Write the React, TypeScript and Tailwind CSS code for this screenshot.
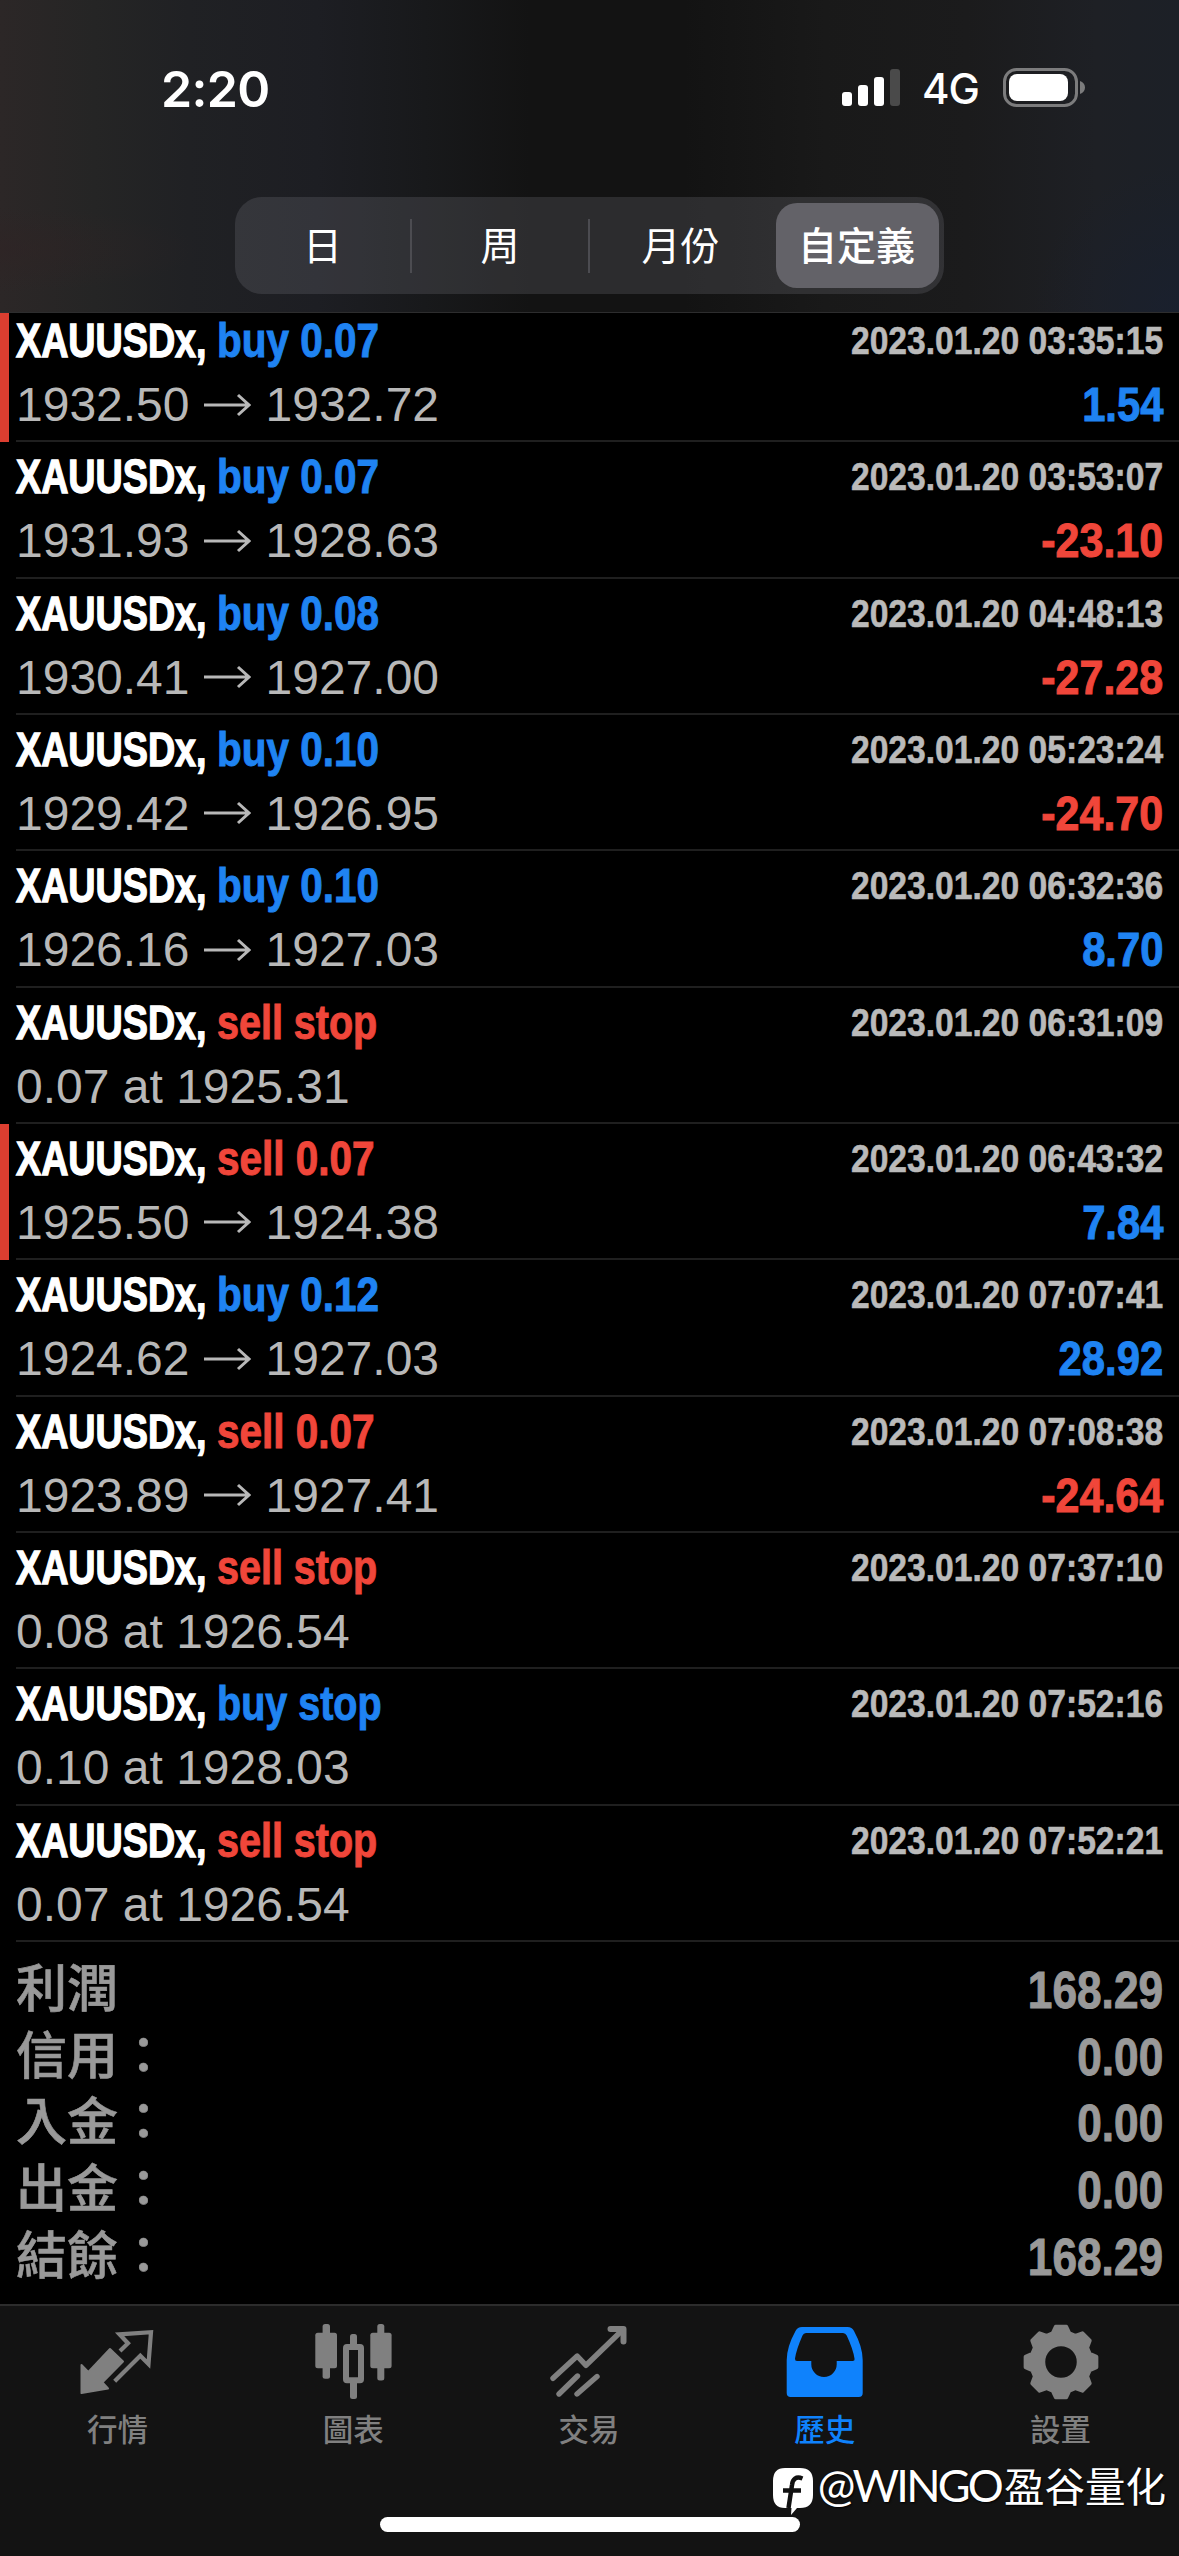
import type { ReactNode } from "react";
import clsx from "clsx";

type Side = "buy" | "sell";

interface Deal {
  side: Side;
  label: string;
  time: string;
  open?: string;
  close?: string;
  note?: string;
  profit?: string;
  marked?: boolean;
}

const deals: Deal[] = [
  { side: "buy", label: "buy 0.07", time: "2023.01.20 03:35:15", open: "1932.50", close: "1932.72", profit: "1.54", marked: true },
  { side: "buy", label: "buy 0.07", time: "2023.01.20 03:53:07", open: "1931.93", close: "1928.63", profit: "-23.10" },
  { side: "buy", label: "buy 0.08", time: "2023.01.20 04:48:13", open: "1930.41", close: "1927.00", profit: "-27.28" },
  { side: "buy", label: "buy 0.10", time: "2023.01.20 05:23:24", open: "1929.42", close: "1926.95", profit: "-24.70" },
  { side: "buy", label: "buy 0.10", time: "2023.01.20 06:32:36", open: "1926.16", close: "1927.03", profit: "8.70" },
  { side: "sell", label: "sell stop", time: "2023.01.20 06:31:09", note: "0.07 at 1925.31" },
  { side: "sell", label: "sell 0.07", time: "2023.01.20 06:43:32", open: "1925.50", close: "1924.38", profit: "7.84", marked: true },
  { side: "buy", label: "buy 0.12", time: "2023.01.20 07:07:41", open: "1924.62", close: "1927.03", profit: "28.92" },
  { side: "sell", label: "sell 0.07", time: "2023.01.20 07:08:38", open: "1923.89", close: "1927.41", profit: "-24.64" },
  { side: "sell", label: "sell stop", time: "2023.01.20 07:37:10", note: "0.08 at 1926.54" },
  { side: "buy", label: "buy stop", time: "2023.01.20 07:52:16", note: "0.10 at 1928.03" },
  { side: "sell", label: "sell stop", time: "2023.01.20 07:52:21", note: "0.07 at 1926.54" },
];

const totals = [
  { label: "利潤", value: "168.29" },
  { label: "信用：", value: "0.00" },
  { label: "入金：", value: "0.00" },
  { label: "出金：", value: "0.00" },
  { label: "結餘：", value: "168.29" },
];

function StatusBar() {
  return (
    <div className="flex h-[197px] items-start justify-between pl-[161px] pr-[94px] pt-[56px] text-white">
      <span className="mt-[1px] font-['Inter'] text-[50px] font-semibold leading-[64px] tracking-[-0.7px]">2:20</span>
      <div className="flex h-[64px] items-center">
        <svg width="58" height="38" viewBox="0 0 58 38" fill="#fff">
          <rect x="0" y="23" width="10" height="14" rx="3" />
          <rect x="16" y="16" width="10" height="21" rx="3" />
          <rect x="32" y="8" width="10" height="29" rx="3" />
          <rect x="48" y="0" width="10" height="37" rx="3" fill="#4a4a4a" />
        </svg>
        <span className="ml-[22px] mt-[2px] w-[59px] font-['Inter'] text-[42px] font-medium leading-[64px] tracking-[-1px]">
          4G
        </span>
        <svg className="ml-[22px]" width="82" height="40" viewBox="0 0 82 40">
          <rect x="1.5" y="1.5" width="72" height="36" rx="12" fill="none" stroke="#7c7c7d" strokeWidth="3" />
          <rect x="6" y="6" width="59" height="27" rx="8" fill="#fff" />
          <path d="M77 13c3 1 5 3.500 5 6.500s-2 5.500-5 6.500z" fill="#7c7c7d" />
        </svg>
      </div>
    </div>
  );
}

function PeriodPicker() {
  return (
    <div className="mx-auto flex h-[97px] w-[709px] items-center rounded-[27px] bg-[#767680]/25 text-center font-['Noto_Sans_CJK_TC',sans-serif] text-[39px] leading-[85px] text-white">
      <div className="w-[175px] pb-[4px]">日</div>
      <div className="h-[54px] w-[2px] bg-[#4c4c51]" />
      <div className="w-[176px] pb-[4px]">周</div>
      <div className="h-[54px] w-[2px] bg-[#4c4c51]" />
      <div className="w-[181px] pb-[4px]">月份</div>
      <div className="ml-[5px] h-[85px] w-[163px] rounded-[21px] bg-[#636268] pr-[2px] font-medium leading-[81px]">自定義</div>
    </div>
  );
}

function PriceArrow() {
  return (
    <svg className="ml-[14px] mr-[15px] shrink-0" width="47" height="24" viewBox="0 0 47 24" fill="none" stroke="#b8b8b8" strokeWidth="3">
      <path d="M0 12h45M34 2l11 10-11 10" />
    </svg>
  );
}

function DealRow({ deal, first }: { deal: Deal; first: boolean }) {
  return (
    <div className={clsx("flex h-[136.33px]", first && "-mt-[7px]")}>
      <div className={clsx("w-[9px]", deal.marked && "bg-[#dc3e30]")} />
      <div className="ml-[7px] flex-1 whitespace-nowrap border-b-2 border-[#1f1f1f] pr-[16px]">
        <div className="flex h-[69px] items-center justify-between font-bold leading-[69px]">
          <div className="flex text-[48px]">
            <span className="w-[201px] origin-left scale-x-[0.785] text-white [-webkit-text-stroke:1.4px]">XAUUSDx,</span>
            <span
              className={clsx(
                "origin-left [-webkit-text-stroke:1px]",
                deal.side === "buy" ? "text-[#1f83f2]" : "text-[#f0463a]",
                deal.label.endsWith("stop") ? "scale-x-[0.823]" : "scale-x-[0.843]",
              )}
            >
              {deal.label}
            </span>
          </div>
          <span className="origin-right scale-x-[0.862] text-[39px] text-[#bababa] [-webkit-text-stroke:0.6px]">
            {deal.time}
          </span>
        </div>
        <div className="flex h-[59px] items-center justify-between text-[48px] leading-[59px]">
          {deal.note ? (
            <span className="text-[#b8b8b8]">{deal.note}</span>
          ) : (
            <div className="flex items-center text-[#b8b8b8]">
              <span>{deal.open}</span>
              <PriceArrow />
              <span>{deal.close}</span>
            </div>
          )}
          {deal.profit && (
            <span
              className={clsx(
                "origin-right font-bold [-webkit-text-stroke:1px]",
                deal.profit.startsWith("-") ? "scale-x-[0.895] text-[#f0463a]" : "scale-x-[0.87] text-[#1f83f2]",
              )}
            >
              {deal.profit}
            </span>
          )}
        </div>
      </div>
    </div>
  );
}

function Totals() {
  return (
    <div className="h-[362px] px-[16px] pt-[15px] text-[#999999]">
      {totals.map((row) => (
        <div key={row.label} className="flex h-[66.6px] items-center justify-between leading-[66px]">
          <span className="font-['Liberation_Sans','Noto_Sans_CJK_TC',sans-serif] text-[51px] font-medium [-webkit-text-stroke:0.6px]">
            {row.label}
          </span>
          <span className="origin-right scale-x-[0.85] text-[52px] font-bold [-webkit-text-stroke:1px]">{row.value}</span>
        </div>
      ))}
    </div>
  );
}

function QuotesIcon() {
  return (
    <svg width="84" height="84" viewBox="0 0 84 84">
      <path d="M5.500 45L12.300 52 34 29 47 41.500 26.500 62.300 32 68.500 5.500 73z" fill="currentColor" stroke="currentColor" strokeWidth="2" strokeLinejoin="round" />
      <path d="M38.700 61.300L64.300 35.700 72.500 44 75 12.200 43.500 14.300 52 23.300 44 31" fill="none" stroke="currentColor" strokeWidth="4.200" />
    </svg>
  );
}

function ChartIcon() {
  return (
    <svg width="84" height="84" viewBox="0 0 84 84" fill="currentColor">
      <rect x="3.300" y="12.700" width="21.700" height="35.600" rx="2.500" />
      <rect x="10.600" y="4" width="7.400" height="54.700" rx="2.500" />
      <rect x="58.300" y="12.700" width="21.300" height="35.600" rx="2.500" />
      <rect x="65.300" y="4" width="7" height="56.500" rx="2.500" />
      <rect x="38" y="14" width="7" height="15" rx="2.500" />
      <rect x="38" y="60" width="7" height="19" rx="2.500" />
      <rect x="34" y="27" width="15" height="33.300" rx="1" fill="none" stroke="currentColor" strokeWidth="6" />
    </svg>
  );
}

function TradeIcon() {
  return (
    <svg width="84" height="84" viewBox="0 0 84 84" fill="none" stroke="currentColor" strokeLinecap="round" strokeLinejoin="round">
      <path d="M6 58.300L30.200 36 39 45.300 75 10.500" strokeWidth="5.400" />
      <path d="M63.500 9H76.500V21.500" strokeWidth="6" />
      <path d="M12 74L30.500 56M30 74L50 56.500" strokeWidth="5.400" />
    </svg>
  );
}

function HistoryIcon() {
  return (
    <svg width="84" height="84" viewBox="0 0 84 84" fill="currentColor" fillRule="evenodd">
      <path d="M19 7H64.500Q69 7 71 11Q79.700 27 79.700 40V73Q79.700 77 75.700 77H7.700Q3.700 77 3.700 73V40Q3.700 27 12.500 11Q14.500 7 19 7ZM23 13Q20.500 13 19.500 15.500Q13.500 29 12 38.500Q11.800 41 14 41H28.300V44.300A12.700 12.700 0 0 0 53.700 44.300V41H69.500Q71.900 41 71.500 38.500Q70 29 63.700 15.500Q62.500 13 60 13Z" />
    </svg>
  );
}

// eight teeth, four corners each
const gearPoints = Array.from({ length: 8 }, (_, i) =>
  [
    [-16.5, 30],
    [-8.5, 36],
    [8.5, 36],
    [16.5, 30],
  ]
    .map(([offset, radius]) => {
      const angle = ((i * 45 + offset) * Math.PI) / 180;
      return `${42 + radius * Math.sin(angle)} ${42 - radius * Math.cos(angle)}`;
    })
    .join("L"),
).join("L");

function SettingsIcon() {
  return (
    <svg width="84" height="84" viewBox="0 0 84 84" fill="currentColor" fillRule="evenodd">
      <path
        d={`M${gearPoints}ZM42 24.500a17.500 17.500 0 1 0 0 35a17.500 17.500 0 1 0 0 -35Z`}
        stroke="currentColor"
        strokeWidth="3.500"
        strokeLinejoin="round"
      />
    </svg>
  );
}

const tabs: { label: string; icon: ReactNode; active?: boolean }[] = [
  { label: "行情", icon: <QuotesIcon /> },
  { label: "圖表", icon: <ChartIcon /> },
  { label: "交易", icon: <TradeIcon /> },
  { label: "歷史", icon: <HistoryIcon />, active: true },
  { label: "設置", icon: <SettingsIcon /> },
];

function TabBar() {
  return (
    <div className="relative h-[252px] border-t-2 border-[#2c2c2c] bg-[#131313]">
      <div className="flex pt-[14px]">
        {tabs.map((tab) => (
          <div
            key={tab.label}
            className={clsx("flex flex-1 flex-col items-center", tab.active ? "text-[#0f82fc]" : "text-[#808080]")}
          >
            {tab.icon}
            <span className="mt-[4px] pr-[1px] font-['Noto_Sans_CJK_TC',sans-serif] text-[30.5px] font-medium leading-[40px]">
              {tab.label}
            </span>
          </div>
        ))}
      </div>
      {/* home indicator */}
      <div className="absolute bottom-[24px] left-[380px] h-[15px] w-[420px] rounded-full bg-white" />
      {/* author tag */}
      <div className="absolute bottom-[40px] right-[13px] flex items-center whitespace-nowrap leading-[60px] text-white [text-shadow:1px_1px_2px_#000]">
        <svg className="mr-[4px] mt-[15px]" width="42" height="48" viewBox="0 0 42 48">
          <path
            d="M13 0H28Q41 0 41 13V27Q41 40 28 40H25L19 47 19.500 40H13Q1 40 1 27V13Q1 0 13 0Z"
            fill="#fff"
          />
          <path d="M30.500 10.500C24 8 20.500 11 20 17L16.500 40M11 22.500H29" fill="none" stroke="#111" strokeWidth="4.500" />
        </svg>
        <span className="font-['Lato'] text-[45px] tracking-[-2.8px]">@WINGO</span>
        <span className="ml-[3px] font-['Noto_Sans_CJK_SC',sans-serif] text-[40.5px]">盈谷量化</span>
      </div>
    </div>
  );
}

export default function App() {
  return (
    <div className="flex h-[2556px] w-[1179px] flex-col overflow-hidden bg-black font-['Liberation_Sans',sans-serif]">
      <header className="h-[313px] shrink-0 border-b border-[#2d2d2e] bg-[radial-gradient(circle_at_100%_100%,#17203480_0%,transparent_12%),radial-gradient(ellipse_at_0%_80%,#30232480_0%,transparent_12%),linear-gradient(90deg,#2c2727_0%,#252525_8%,#202124_16%,#1d1e23_27%,#18191b_36%,#131313_45%,#131313_58%,#191919_70%,#1b1b1c_82%,#1e2025_93%,#1c2027_100%)]">
        <StatusBar />
        <PeriodPicker />
      </header>
      <main className="h-[1629px] shrink-0 overflow-hidden">
        {deals.map((deal, i) => (
          <DealRow key={deal.time} deal={deal} first={i === 0} />
        ))}
      </main>
      <Totals />
      <TabBar />
    </div>
  );
}
